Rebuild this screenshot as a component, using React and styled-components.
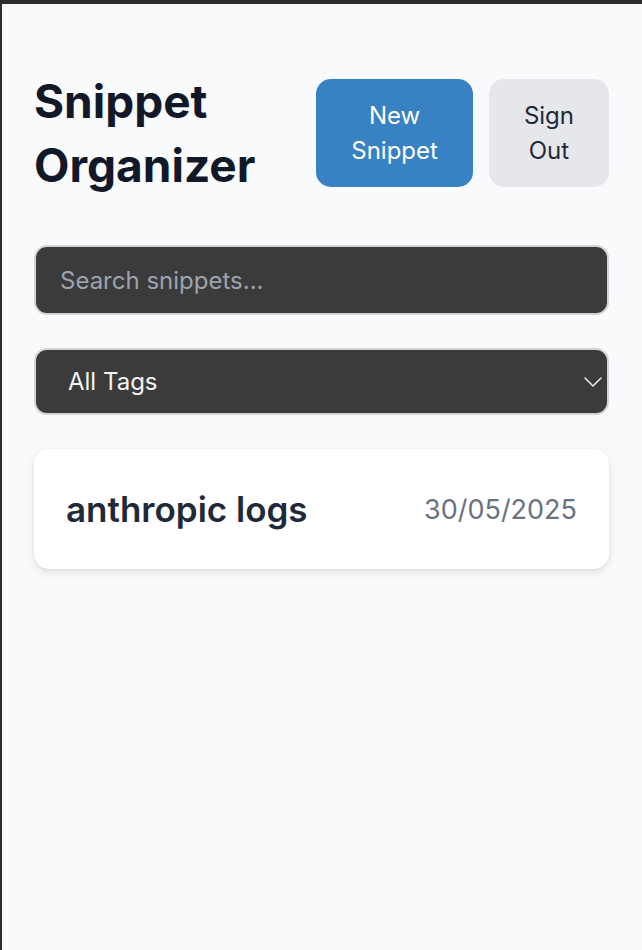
import styled, { createGlobalStyle } from "styled-components";

const GlobalStyle = createGlobalStyle`
    html, body {
        margin: 0;
        padding: 0;
        background: #2b2b2b;
    }
    * {
        box-sizing: border-box;
    }
`

const Frame = styled.div`
    min-height: 100vh;
    border-top: 4px solid #2e2e2e;
    border-left: 2px solid #2e2e2e;
    background: #f9fafb;
    padding: 65px 33px 40px 32px;
    font-family: Inter, "Noto Sans", sans-serif;
`
const Header = styled.div`
    display: flex;
    justify-content: space-between;
    align-items: center;
`
const Title = styled.h1`
    margin: 0;
    font-size: 46px;
    line-height: 64px;
    font-weight: 700;
    color: #111827;
`
const ButtonRow = styled.div`
    display: flex;
    gap: 16px;
`
const Button = styled.button`
    width: min-content;
    padding: 19px 35px;
    border: none;
    border-radius: 15px;
    font-family: inherit;
    font-size: 24px;
    line-height: 35px;
    font-weight: 400;
    background: ${props => props.$primary ? '#3881c2' : '#e5e7eb'};
    color: ${props => props.$primary ? '#ffffff' : '#1f2937'};
    cursor: pointer;
`
const Field = styled.div`
    position: relative;
    margin-top: ${props => props.$top}px;
`
const SearchInput = styled.input`
    display: block;
    width: 100%;
    height: 70px;
    padding: 0 24px;
    background: #3b3b3b;
    border: 2px solid #d4d4d8;
    border-radius: 13px;
    font-family: inherit;
    font-size: 24px;
    color: #f3f4f6;
    outline: none;

    &::placeholder {
        color: #9ca3af;
    }
`
const Select = styled.select`
    display: block;
    width: 100%;
    height: 67px;
    padding: 0 32px;
    appearance: none;
    background: #3b3b3b;
    border: 2px solid #d4d4d8;
    border-radius: 13px;
    font-family: inherit;
    font-size: 24px;
    color: #f3f4f6;
    outline: none;
`
const Chevron = styled.svg`
    position: absolute;
    right: 7px;
    top: 50%;
    transform: translateY(-50%);
    pointer-events: none;
`
const Card = styled.div`
    margin-top: 34px;
    height: 120px;
    padding: 0 32px;
    background: #ffffff;
    border-radius: 15px;
    box-shadow: 0 4px 10px rgba(0,0,0,.09), 0 1px 3px rgba(0,0,0,.06);
    display: flex;
    justify-content: space-between;
    align-items: center;
`
const CardTitle = styled.span`
    font-size: 35px;
    font-weight: 600;
    color: #1f2937;
`
const CardDate = styled.span`
    font-size: 27px;
    color: #6b7280;
`

export default function App() {
    //page composition
    return <>
        <GlobalStyle />
        <Frame>
            <Header>
                <Title>Snippet<br />Organizer</Title>
                <ButtonRow>
                    <Button $primary>New Snippet</Button>
                    <Button>Sign Out</Button>
                </ButtonRow>
            </Header>
            <Field $top={48}>
                <SearchInput placeholder='Search snippets...' />
            </Field>
            <Field $top={33}>
                <Select defaultValue='all'>
                    <option value='all'>All Tags</option>
                </Select>
                <Chevron width='18' height='10' viewBox='0 0 18 10' fill='none'>
                    <path d='M1 1l8 8 8-8' stroke='#e5e7eb' strokeWidth='1.6' strokeLinecap='round' strokeLinejoin='round' />
                </Chevron>
            </Field>
            <Card>
                <CardTitle>anthropic logs</CardTitle>
                <CardDate>30/05/2025</CardDate>
            </Card>
        </Frame>
    </>
}
